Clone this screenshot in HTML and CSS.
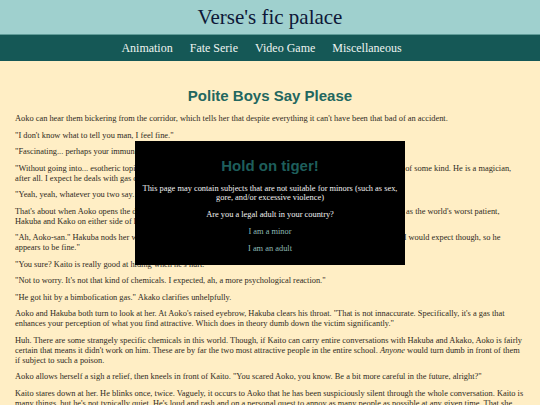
FILE: index.html
```html
<!DOCTYPE html>
<html>
  <head>
    <meta charset="UTF-8" />
    <title>Polite Boys Say Please - Verse's fic palace</title>
    <link rel="stylesheet" href="styles.css">
  </head>
  <body>
    <div class="banner">
      <h1>Verse's fic palace</h1>
    </div>

    <div class="menu">
      <a href="#">Animation</a>
      <a href="#">Fate Serie</a>
      <a href="#">Video Game</a>
      <a href="#">Miscellaneous</a>
    </div>

    <div class="story">
      <h2>Polite Boys Say Please</h2>

      <p>Aoko can hear them bickering from the corridor, which tells her that despite everything it can't have been that bad of an accident.</p>
      <p>"I don't know what to tell you man, I feel fine."</p>
      <p>"Fascinating... perhaps your immune system is simply used to it."</p>
      <p>"Without going into... esotheric topics, I'd say the substance Kuroba was exposed to is most likely, a chemical agent of some kind. He is a magician, after all. I expect he deals with gas quite a lot."</p>
      <p>"Yeah, yeah, whatever you two say. Can I go now?"</p>
      <p>That's about when Aoko opens the door to the infirmary and finds Kaito sitting on one of the beds, looking every bit as the world's worst patient, Hakuba and Kako on either side of him.</p>
      <p>"Ah, Aoko-san." Hakuba nods her way. "We were just discussing it. Kuroba has yet to display any of the symptoms I would expect though, so he appears to be fine."</p>
      <p>"You sure? Kaito is really good at hiding when he's hurt."</p>
      <p>"Not to worry. It's not that kind of chemicals. I expected, ah, a more psychological reaction."</p>
      <p>"He got hit by a bimbofication gas." Akako clarifies unhelpfully.</p>
      <p>Aoko and Hakuba both turn to look at her. At Aoko's raised eyebrow, Hakuba clears his throat. "That is not innaccurate. Specifically, it's a gas that enhances your perception of what you find attractive. Which does in theory dumb down the victim significantly."</p>
      <p>Huh. There are some strangely specific chemicals in this world. Though, if Kaito can carry entire conversations with Hakuba and Akako, Aoko is fairly certain that means it didn't work on him. These are by far the two most attractive people in the entire school. <em>Anyone</em> would turn dumb in front of them if subject to such a poison.</p>
      <p>Aoko allows herself a sigh a relief, then kneels in front of Kaito. "You scared Aoko, you know. Be a bit more careful in the future, alright?"</p>
      <p>Kaito stares down at her. He blinks once, twice. Vaguely, it occurs to Aoko that he has been suspiciously silent through the whole conversation. Kaito is many things, but he's not typically quiet. He's loud and rash and on a personal quest to annoy as many people as possible at any given time. That she hasn't heard his voice ever since she entered the room is a source of concern of its own.</p>
    </div>

    <!-- age check, shown on top of the story -->
    <div class="agegate">
      <h3>Hold on tiger!</h3>
      <p>This page may contain subjects that are not suitable for minors (such as sex, gore, and/or excessive violence)</p>
      <p>Are you a legal adult in your country?</p>
      <a href="#">I am a minor</a>
      <a href="#">I am an adult</a>
    </div>
  </body>
</html>
```

FILE: styles.css
```css
body {
  margin: 0;
  background-color: #ffeec5;
  font-family: "Liberation Serif", serif;
  color: #2e2a22;
}

/* Site title */
.banner {
  background-color: #9fd0ce;
  height: 35px;
  border-bottom: 1px solid #5f9c99;
  box-sizing: border-box;
}

.banner h1 {
  margin: 0;
  text-align: center;
  font-weight: normal;
  font-size: 21px;
  line-height: 35px;
  color: #0e1838;
}

/* Category links, each one keeps its right margin */
.menu {
  background-color: #155856;
  height: 26px;
  display: flex;
  justify-content: center;
  align-items: center;
}

.menu a {
  color: #eef4f1;
  text-decoration: none;
  font-size: 12px;
  margin-right: 17px;
}

/* The fic itself */
.story {
  padding: 0 15px;
}

.story h2 {
  font-family: "Liberation Sans", sans-serif;
  font-size: 15px;
  color: #22675f;
  text-align: center;
  margin: 27px 0 10px 0;
  line-height: 16px;
}

.story p {
  font-size: 8.4px;
  line-height: 10px;
  margin: 6.5px 0;
}

/* Age check box */
.agegate {
  position: fixed;
  top: 50%;
  left: 50%;
  transform: translate(-50%, -50%);
  width: 270px;
  height: 124px;
  box-sizing: border-box;
  background-color: #000;
  text-align: center;
  padding-top: 17px;
}

.agegate h3 {
  font-family: "Liberation Sans", sans-serif;
  font-size: 15px;
  line-height: 16px;
  color: #1e5e5b;
  margin: 0 0 10px 0;
}

.agegate p {
  color: #f2f2f2;
  font-size: 8.4px;
  line-height: 9.5px;
  margin: 0 0 7.5px 0;
  padding: 0 6px;
}

.agegate a {
  display: block;
  color: #8db9b5;
  text-decoration: none;
  font-size: 8.4px;
  line-height: 9.5px;
  margin-bottom: 7px;
}
```
